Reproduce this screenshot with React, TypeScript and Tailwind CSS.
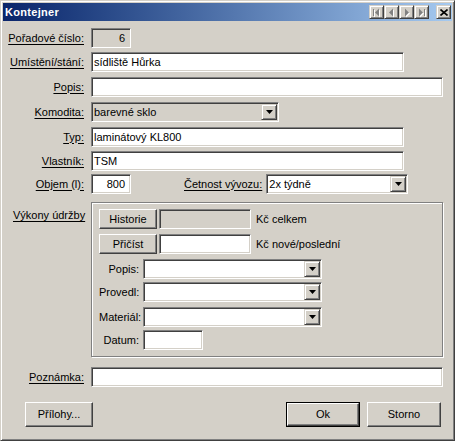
import React from "react";

const sunken =
  "border border-t-[#808080] border-l-[#808080] border-b-white border-r-white shadow-[inset_1px_1px_0_#404040,inset_-1px_-1px_0_#d4d0c8]";
const raised =
  "border border-t-white border-l-white border-b-[#404040] border-r-[#404040] shadow-[inset_-1px_-1px_0_#808080]";
const raisedSmall =
  "border border-t-[#d4d0c8] border-l-[#d4d0c8] border-b-[#404040] border-r-[#404040] shadow-[inset_1px_1px_0_#ffffff,inset_-1px_-1px_0_#808080]";

function Arrow() {
  return (
    <svg width="7" height="4" viewBox="0 0 7 4">
      <polygon points="0,0 7,0 3.5,4" fill="#000" />
    </svg>
  );
}

function ArrowBtn() {
  return (
    <div className={`w-[16px] h-[16px] bg-[#d4d0c8] flex items-center justify-center ${raisedSmall}`}>
      <Arrow />
    </div>
  );
}

function Field({ w, value, gray, right }: { w: string; value?: string; gray?: boolean; right?: boolean }) {
  return (
    <div
      className={`h-[20px] ${w} ${sunken} ${gray ? "bg-[#d4d0c8]" : "bg-white"} flex items-center px-[2px] ${
        right ? "justify-end pr-[5px]" : ""
      } whitespace-nowrap`}
    >
      {value}
    </div>
  );
}

function Combo({ w, value, gray }: { w: string; value?: string; gray?: boolean }) {
  return (
    <div className={`h-[20px] ${w} ${sunken} ${gray ? "bg-[#d4d0c8]" : "bg-white"} flex items-stretch p-[1px]`}>
      <div className="flex-1 flex items-center pl-[1px] whitespace-nowrap">{value}</div>
      <ArrowBtn />
    </div>
  );
}

function Label({ children }: { children: React.ReactNode }) {
  return <div className="w-[81px] text-right underline underline-offset-[2px] whitespace-nowrap">{children}</div>;
}

function PushBtn({ w, h, children, def }: { w: string; h: string; children: React.ReactNode; def?: boolean }) {
  if (def) {
    return (
      <div className={`${w} ${h} border border-black`}>
        <div className={`w-full h-full bg-[#d4d0c8] flex items-center justify-center ${raised}`}>{children}</div>
      </div>
    );
  }
  return <div className={`${w} ${h} bg-[#d4d0c8] flex items-center justify-center ${raised}`}>{children}</div>;
}

function NavIcon({ kind }: { kind: "first" | "prev" | "next" | "last" }) {
  const shapes = (fill: string, dx: number) => {
    const g: React.ReactNode[] = [];
    if (kind === "first") {
      g.push(<rect key="b" x={2 + dx} y={2 + dx} width={1} height={7} fill={fill} />);
      g.push(<polygon key="t" points={`${4 + dx},${5.5 + dx} ${8 + dx},${1.5 + dx} ${8 + dx},${9.5 + dx}`} fill={fill} />);
    } else if (kind === "prev") {
      g.push(<polygon key="t" points={`${3 + dx},${5.5 + dx} ${7 + dx},${1.5 + dx} ${7 + dx},${9.5 + dx}`} fill={fill} />);
    } else if (kind === "next") {
      g.push(<polygon key="t" points={`${8 + dx},${5.5 + dx} ${4 + dx},${1.5 + dx} ${4 + dx},${9.5 + dx}`} fill={fill} />);
    } else {
      g.push(<polygon key="t" points={`${7 + dx},${5.5 + dx} ${3 + dx},${1.5 + dx} ${3 + dx},${9.5 + dx}`} fill={fill} />);
      g.push(<rect key="b" x={8 + dx} y={2 + dx} width={1} height={7} fill={fill} />);
    }
    return g;
  };
  return (
    <svg width="11" height="11" viewBox="0 0 11 11">
      {shapes("#ffffff", 1)}
      {shapes("#808080", 0)}
    </svg>
  );
}

function TitleBtn({ children }: { children: React.ReactNode }) {
  return (
    <div className={`w-[15px] h-[14px] bg-[#d4d0c8] flex items-center justify-center ${raisedSmall}`}>{children}</div>
  );
}

export default function App() {
  return (
    <div
      className="w-[455px] h-[441px] bg-[#d4d0c8] border border-t-[#d4d0c8] border-l-[#d4d0c8] border-b-[#404040] border-r-[#404040] shadow-[inset_1px_1px_0_#ffffff,inset_-1px_-1px_0_#808080] p-[2px] font-['Liberation_Sans',Arial,sans-serif] text-[11px] leading-none text-black"
    >
      {/* Title bar */}
      <div className="h-[18px] bg-gradient-to-r from-[#0a246a] to-[#a6caf0] flex items-center pl-[2px] pr-[1px]">
        <div className="text-white font-bold text-[11px] tracking-[0.3px]">Kontejner</div>
        <div className="flex-1" />
        <div className="flex">
          <TitleBtn>
            <NavIcon kind="first" />
          </TitleBtn>
          <TitleBtn>
            <NavIcon kind="prev" />
          </TitleBtn>
          <TitleBtn>
            <NavIcon kind="next" />
          </TitleBtn>
          <TitleBtn>
            <NavIcon kind="last" />
          </TitleBtn>
        </div>
        <div className="ml-[7px]">
          <div className={`w-[15px] h-[14px] bg-[#d4d0c8] flex items-center justify-center ${raisedSmall}`}>
            <svg width="8" height="7" viewBox="0 0 8 7">
              <path d="M0.5 0.5 L7.5 6.5 M7.5 0.5 L0.5 6.5" stroke="#000" strokeWidth="1.6" />
            </svg>
          </div>
        </div>
      </div>

      {/* Body */}
      <div className="flex flex-col">
        <div className="flex items-center mt-[7px]">
          <Label>Pořadové číslo:</Label>
          <div className="ml-[7px]">
            <Field w="w-[40px]" value="6" gray right />
          </div>
        </div>
        <div className="flex items-center mt-[4px]">
          <Label>Umístění/stání:</Label>
          <div className="ml-[7px]">
            <Field w="w-[313px]" value="sídliště Hůrka" />
          </div>
        </div>
        <div className="flex items-center mt-[5px]">
          <Label>Popis:</Label>
          <div className="ml-[7px]">
            <Field w="w-[352px]" />
          </div>
        </div>
        <div className="flex items-center mt-[5px]">
          <Label>Komodita:</Label>
          <div className="ml-[7px]">
            <Combo w="w-[188px]" value="barevné sklo" gray />
          </div>
        </div>
        <div className="flex items-center mt-[5px]">
          <Label>Typ:</Label>
          <div className="ml-[7px]">
            <Field w="w-[313px]" value="laminátový KL800" />
          </div>
        </div>
        <div className="flex items-center mt-[4px]">
          <Label>Vlastník:</Label>
          <div className="ml-[7px]">
            <Field w="w-[313px]" value="TSM" />
          </div>
        </div>
        <div className="flex items-center mt-[3px]">
          <Label>Objem (l):</Label>
          <div className="ml-[7px]">
            <Field w="w-[40px]" value="800" right />
          </div>
          <div className="ml-[53px] underline underline-offset-[2px] whitespace-nowrap">Četnost vývozu:</div>
          <div className="ml-[4px]">
            <Combo w="w-[142px]" value="2x týdně" />
          </div>
        </div>

        {/* Group */}
        <div className="flex mt-[8px]">
          <div className="w-[88px] pl-[10px] pt-[8px]">
            <span className="underline underline-offset-[2px] whitespace-nowrap">Výkony údržby</span>
          </div>
          <div className="w-[352px] h-[155px] border border-[#808080] shadow-[inset_1px_1px_0_#ffffff,1px_1px_0_#ffffff] pl-[7px] pt-[6px] flex flex-col">
            <div className="flex items-center">
              <PushBtn w="w-[58px]" h="h-[20px]">Historie</PushBtn>
              <div className="ml-[2px]">
                <Field w="w-[92px]" gray />
              </div>
              <div className="ml-[5px] whitespace-nowrap">Kč celkem</div>
            </div>
            <div className="flex items-center mt-[5px]">
              <PushBtn w="w-[58px]" h="h-[20px]">Přičíst</PushBtn>
              <div className="ml-[2px]">
                <Field w="w-[92px]" />
              </div>
              <div className="ml-[5px] whitespace-nowrap">Kč nové/poslední</div>
            </div>
            <div className="flex items-center mt-[5px]">
              <div className="w-[40px] text-right whitespace-nowrap">Popis:</div>
              <div className="ml-[4px]">
                <Combo w="w-[179px]" />
              </div>
            </div>
            <div className="flex items-center mt-[3px]">
              <div className="w-[40px] text-right whitespace-nowrap">Provedl:</div>
              <div className="ml-[4px]">
                <Combo w="w-[179px]" />
              </div>
            </div>
            <div className="flex items-center mt-[5px]">
              <div className="w-[40px] text-right whitespace-nowrap">Materiál:</div>
              <div className="ml-[4px]">
                <Combo w="w-[179px]" />
              </div>
            </div>
            <div className="flex items-center mt-[3px]">
              <div className="w-[40px] text-right whitespace-nowrap">Datum:</div>
              <div className="ml-[4px]">
                <Field w="w-[60px]" />
              </div>
            </div>
          </div>
        </div>

        <div className="flex items-center mt-[10px]">
          <Label>Poznámka:</Label>
          <div className="ml-[7px]">
            <Field w="w-[352px]" />
          </div>
        </div>

        <div className="flex items-center mt-[15px] pl-[22px] pr-[11px]">
          <PushBtn w="w-[68px]" h="h-[25px]">Přílohy...</PushBtn>
          <div className="flex-1" />
          <PushBtn w="w-[74px]" h="h-[25px]" def>
            Ok
          </PushBtn>
          <div className="ml-[7px]">
            <PushBtn w="w-[74px]" h="h-[25px]">Storno</PushBtn>
          </div>
        </div>
      </div>
    </div>
  );
}
